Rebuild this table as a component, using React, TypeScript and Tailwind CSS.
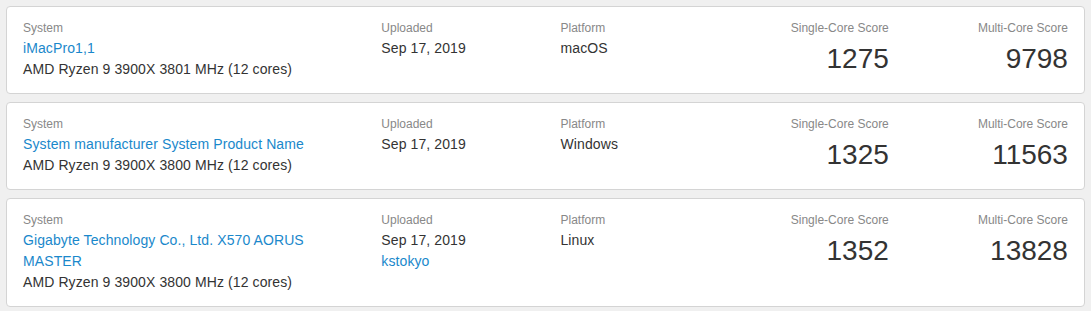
import React from 'react';

type Result = {
  system: string;
  cpu: string;
  uploaded: string;
  user?: string;
  platform: string;
  single: number;
  multi: number;
};

const results: Result[] = [
  {
    system: 'iMacPro1,1',
    cpu: 'AMD Ryzen 9 3900X 3801 MHz (12 cores)',
    uploaded: 'Sep 17, 2019',
    platform: 'macOS',
    single: 1275,
    multi: 9798,
  },
  {
    system: 'System manufacturer System Product Name',
    cpu: 'AMD Ryzen 9 3900X 3800 MHz (12 cores)',
    uploaded: 'Sep 17, 2019',
    platform: 'Windows',
    single: 1325,
    multi: 11563,
  },
  {
    system: 'Gigabyte Technology Co., Ltd. X570 AORUS MASTER',
    cpu: 'AMD Ryzen 9 3900X 3800 MHz (12 cores)',
    uploaded: 'Sep 17, 2019',
    user: 'kstokyo',
    platform: 'Linux',
    single: 1352,
    multi: 13828,
  },
];

function Label({ children }: { children: React.ReactNode }) {
  return <div className="text-[12px] leading-[19px] text-[#888]">{children}</div>;
}

function ResultCard({ r }: { r: Result }) {
  return (
    <div className="bg-white border border-[#d4d4d4] rounded-[4px] px-4 pt-[12px] pb-[13px]">
      <div className="flex -mx-[15px]">
        {/* System */}
        <div className="w-1/3 px-[15px]">
          <Label>System</Label>
          <a href="#" className="block text-[14px] leading-[21px] tracking-[0.1px] text-[#1a88cb] pr-10">
            {r.system}
          </a>
          <div className="text-[14px] leading-[21px] tracking-[0.1px] text-[#333]">{r.cpu}</div>
        </div>

        {/* Uploaded */}
        <div className="w-1/6 px-[15px]">
          <Label>Uploaded</Label>
          <div className="text-[14px] leading-[21px] tracking-[0.1px] text-[#333]">{r.uploaded}</div>
          {r.user && (
            <a href="#" className="block text-[14px] leading-[21px] tracking-[0.1px] text-[#1a88cb]">
              {r.user}
            </a>
          )}
        </div>

        {/* Platform */}
        <div className="w-1/6 px-[15px]">
          <Label>Platform</Label>
          <div className="text-[14px] leading-[21px] tracking-[0.1px] text-[#333]">{r.platform}</div>
        </div>

        {/* Scores */}
        <div className="w-1/6 px-[15px] text-right">
          <Label>Single-Core Score</Label>
          <div className="text-[28px] leading-[42px] text-[#333]">{r.single}</div>
        </div>
        <div className="w-1/6 px-[15px] text-right">
          <Label>Multi-Core Score</Label>
          <div className="text-[28px] leading-[42px] text-[#333]">{r.multi}</div>
        </div>
      </div>
    </div>
  );
}

export default function App() {
  return (
    <div
      className="min-h-screen bg-[#f0f0f0] p-[6px] flex flex-col gap-2"
      style={{ fontFamily: '"Liberation Sans", Arial, sans-serif' }}
    >
      {results.map((r, i) => (
        <ResultCard key={i} r={r} />
      ))}
    </div>
  );
}
